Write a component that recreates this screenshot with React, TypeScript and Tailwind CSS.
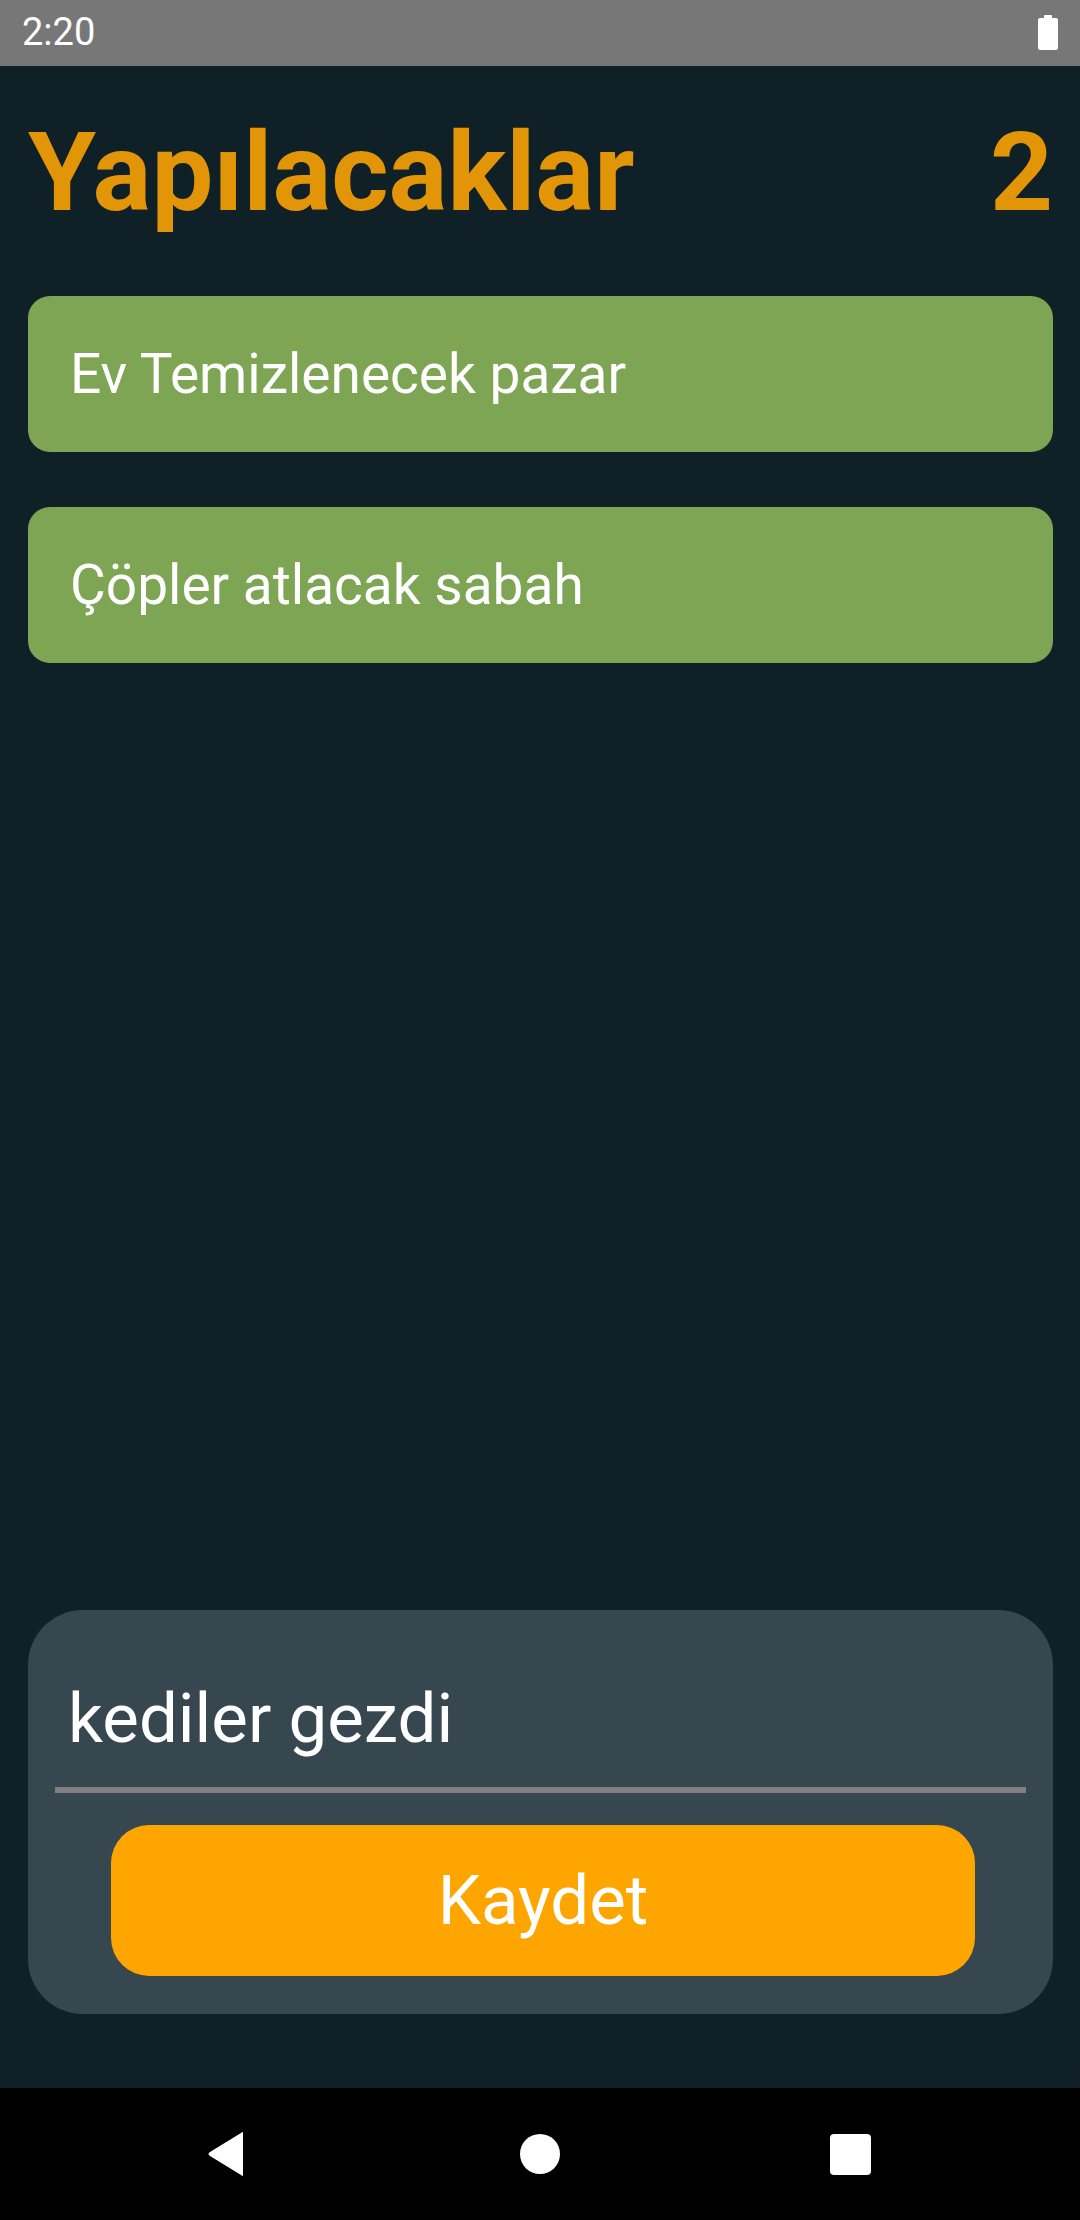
import { useState } from 'react';

export default function App() {
  const [todos] = useState(['Ev Temizlenecek pazar', 'Çöpler atlacak sabah']);
  const [text, setText] = useState('kediler gezdi');

  return (
    <div className="flex flex-col h-[2220px] w-full font-['Roboto',sans-serif] bg-[#102027] overflow-hidden">
      {/* status bar */}
      <div className="h-[66px] shrink-0 bg-[#777777] flex items-center justify-between pl-[22px] pr-[22px]">
        <span className="text-white text-[38px] leading-none -mt-[2px]">2:20</span>
        <div className="flex flex-col items-center -mt-[1px]">
          <div className="w-[8px] h-[3px] bg-white rounded-t-[1px]" />
          <div className="w-[20px] h-[32px] bg-white rounded-[2px]" />
        </div>
      </div>

      {/* content */}
      <div className="flex-1 flex flex-col pl-[28px] pr-[27px]">
        <div className="flex items-start justify-between mt-[52px] h-[110px]">
          <h1 className="text-[110px] leading-[110px] font-bold text-[#e39508]">Yapılacaklar</h1>
          <span className="text-[110px] leading-[110px] font-bold text-[#e39508]">{todos.length}</span>
        </div>

        <div className="flex flex-col gap-[55px] mt-[68px]">
          {todos.map((t, i) => (
            <div key={i} className="h-[156px] rounded-[22px] bg-[#7ea554] flex items-center px-[42px]">
              <span className="text-white text-[55px] leading-none">{t}</span>
            </div>
          ))}
        </div>

        <div className="flex-1" />

        {/* input panel */}
        <div className="mb-[74px] rounded-[55px] bg-[#37474f] px-[27px] pb-[38px]">
          <div className="border-b-[6px] border-[#808080] pt-[68px] pb-[28px] pl-[13px]">
            <input
              value={text}
              onChange={(e) => setText(e.target.value)}
              className="w-full bg-transparent outline-none text-white text-[69px] leading-[81px] h-[81px] font-['Roboto',sans-serif]"
            />
          </div>
          <button className="mt-[32px] ml-[56px] flex items-center justify-center w-[864px] h-[151px] rounded-[38px] bg-[#ffa500] text-white text-[69px] leading-none">
            Kaydet
          </button>
        </div>
      </div>

      {/* nav bar */}
      <div className="h-[132px] shrink-0 bg-black flex items-center pl-[207px]">
        <svg width="38" height="46" viewBox="0 0 38 46">
          <path d="M36 2 L36 44 Q36 46 34 44 L3 25 Q0 23 3 21 L34 2 Q36 0 36 2 Z" fill="white" />
        </svg>
        <div className="ml-[275px] w-[40px] h-[40px] rounded-full bg-white" />
        <div className="ml-[270px] w-[41px] h-[41px] rounded-[4px] bg-white" />
      </div>
    </div>
  );
}
